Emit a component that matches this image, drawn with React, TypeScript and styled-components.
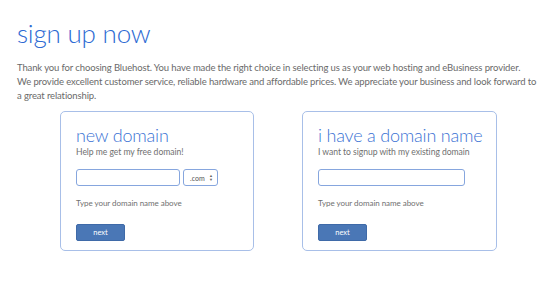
import React from "react";
import styled, { createGlobalStyle } from "styled-components";

const GlobalStyle = createGlobalStyle`
  html, body {
    margin: 0;
    padding: 0;
    background: #ffffff;
  }
  body {
    font-family: Lato, "Open Sans", sans-serif;
  }
`;

const Page = styled.div`
  width: 550px;
  height: 298px;
  padding: 17px 0 0 17px;
  box-sizing: border-box;
  overflow: hidden;
`;

const Title = styled.h1`
  margin: 0;
  font-size: 26px;
  font-weight: 300;
  letter-spacing: -0.2px;
  line-height: 32px;
  color: #2d6ad3;
`;

const Intro = styled.p`
  margin: 12px 0 0;
  font-size: 9.5px;
  letter-spacing: -0.12px;
  line-height: 14px;
  color: #6a6a6a;
  white-space: nowrap;
`;

const Cards = styled.div`
  display: flex;
  gap: 48px;
  margin: 8px 0 0 43px;
`;

const Card = styled.div<{ $width: number }>`
  width: ${(p) => p.$width}px;
  height: 140px;
  box-sizing: border-box;
  border: 1px solid #a8bfe8;
  border-radius: 5px;
  padding: 12px 15px 0;
  display: flex;
  flex-direction: column;
`;

const CardTitle = styled.h2`
  margin: 0;
  font-size: 18px;
  font-weight: 300;
  letter-spacing: -0.2px;
  line-height: 22px;
  color: #3a72d4;
  white-space: nowrap;
`;

const CardSub = styled.div`
  font-size: 8.6px;
  letter-spacing: -0.05px;
  line-height: 13px;
  color: #707070;
  white-space: nowrap;
`;

const Row = styled.div`
  display: flex;
  gap: 3px;
  margin-top: 10px;
`;

const TextInput = styled.input<{ $width: number }>`
  width: ${(p) => p.$width}px;
  height: 17px;
  box-sizing: border-box;
  border: 1px solid #86a6de;
  border-radius: 3px;
  padding: 0 4px;
  font-family: inherit;
  font-size: 10px;
  outline: none;
`;

const TldSelect = styled.div`
  width: 35px;
  height: 17px;
  box-sizing: border-box;
  border: 1px solid #86a6de;
  border-radius: 3px;
  display: flex;
  align-items: center;
  justify-content: space-between;
  padding: 0 4px 0 6px;
  font-size: 7px;
  color: #555;
`;

const Arrows = styled.span`
  display: flex;
  flex-direction: column;
  font-size: 4px;
  line-height: 4px;
  color: #666;
`;

const Hint = styled.div`
  margin-top: 11px;
  font-size: 8px;
  letter-spacing: -0.05px;
  line-height: 12px;
  color: #707070;
  white-space: nowrap;
`;

const NextButton = styled.button`
  margin-top: 15px;
  width: 49px;
  height: 17px;
  box-sizing: border-box;
  border: 1px solid #3f6aa8;
  border-radius: 2px;
  background: #4a77b6;
  color: #ffffff;
  font-family: inherit;
  font-size: 7.5px;
  padding: 0;
  cursor: pointer;
`;

export default function App() {
  return (
    <>
      <GlobalStyle />
      <Page>
        <Title>sign up now</Title>
        <Intro>
          Thank you for choosing Bluehost. You have made the right choice in selecting us as your web hosting and eBusiness provider.
          <br />
          We provide excellent customer service, reliable hardware and affordable prices. We appreciate your business and look forward to
          <br />
          a great relationship.
        </Intro>
        <Cards>
          <Card $width={194}>
            <CardTitle>new domain</CardTitle>
            <CardSub>Help me get my free domain!</CardSub>
            <Row>
              <TextInput $width={104} />
              <TldSelect>
                .com
                <Arrows>
                  <span>▲</span>
                  <span>▼</span>
                </Arrows>
              </TldSelect>
            </Row>
            <Hint>Type your domain name above</Hint>
            <NextButton>next</NextButton>
          </Card>
          <Card $width={195}>
            <CardTitle>i have a domain name</CardTitle>
            <CardSub>I want to signup with my existing domain</CardSub>
            <Row>
              <TextInput $width={147} />
            </Row>
            <Hint>Type your domain name above</Hint>
            <NextButton>next</NextButton>
          </Card>
        </Cards>
      </Page>
    </>
  );
}
